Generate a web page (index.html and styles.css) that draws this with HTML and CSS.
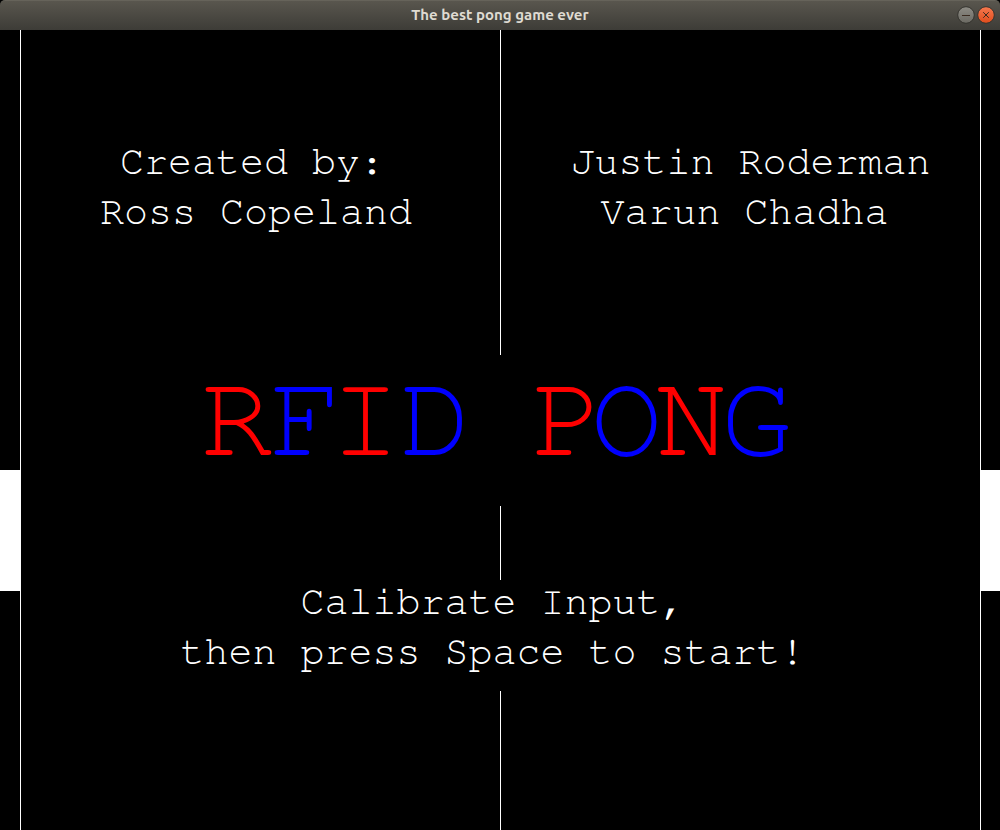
FILE: index.html
```html
<!DOCTYPE html>
<html lang="en">
<head>
<meta charset="utf-8">
<title>The best pong game ever</title>
<link rel="stylesheet" href="styles.css">
</head>
<body>
<div class="window">
  <header class="titlebar">
    <span class="title">The best pong game ever</span>
    <div class="controls">
      <button class="control" type="button" aria-label="Minimize">
        <svg viewBox="0 0 18 18" width="18" height="18">
          <defs><linearGradient id="grey" x2="0" y2="1"><stop stop-color="#8e8c85"/><stop offset="1" stop-color="#6a6962"/></linearGradient></defs>
          <circle class="rim" cx="9" cy="9" r="8.3" fill="url(#grey)"/><path class="mark" d="M5 9.5h8"/>
        </svg>
      </button>
      <button class="control" type="button" aria-label="Close">
        <svg viewBox="0 0 18 18" width="18" height="18">
          <defs><linearGradient id="orange" x2="0" y2="1"><stop stop-color="#f6794f"/><stop offset="1" stop-color="#df4c1c"/></linearGradient></defs>
          <circle class="rim" cx="9" cy="9" r="8.3" fill="url(#orange)"/><path class="mark" d="M6.2 6.2l5.6 5.6M11.8 6.2l-5.6 5.6"/>
        </svg>
      </button>
    </div>
  </header>
  <main class="game">
    <div class="lane lane-left"><div class="paddle"></div></div>
    <div class="court">
      <section class="credits">
        <p class="credit"><span class="line indent-small">Created by:</span><span class="line">Ross Copeland</span></p>
        <p class="credit credit-right"><span class="line">Justin Roderman</span><span class="line indent-large">Varun Chadha</span></p>
      </section>
      <h1 class="logo"><span class="red">R</span><span class="blue">F</span><span class="red">I</span><span class="blue">D </span><span class="red">P</span><span class="blue">O</span><span class="red">N</span><span class="blue">G</span></h1>
      <p class="prompt"><span class="line">Calibrate Input,</span><span class="line">then press Space to start!</span></p>
    </div>
    <div class="lane lane-right"><div class="paddle"></div></div>
  </main>
</div>
</body>
</html>
```
FILE: styles.css
```css
body {
  margin: 0;
  background: #000;
}

.window {
  display: flex;
  flex-direction: column;
  min-height: 100vh;
  background: #000;
  color: #fff;
}

.titlebar {
  display: grid;
  grid-template-columns: 1fr auto 1fr;
  align-items: center;
  box-sizing: border-box;
  height: 30px;
  padding: 0 5px 1px;
  border-top: 1px solid #66635a;
  border-radius: 5px 5px 0 0;
  background: linear-gradient(#59564e, #3d3c37);
}

.title {
  grid-column: 2;
  color: #dfdbd2;
  font: 700 15px/20px Ubuntu, "Noto Sans", sans-serif;
  white-space: nowrap;
}

.controls {
  display: flex;
  justify-content: flex-end;
  gap: 2px;
}

.control {
  display: flex;
  padding: 0;
  border: 0;
  background: none;
}

.rim {
  stroke: #34332e;
  stroke-width: 1;
}

.mark {
  fill: none;
  stroke: #3a2b20;
  stroke-width: 1;
}

.game {
  display: grid;
  flex: 1;
  grid-template-columns: 21px 1fr 20px;
  font: 40px/50px FreeMono, "Nimbus Mono PS", "Liberation Mono", monospace;
}

.lane {
  padding-top: 440px;
}

.lane-left {
  border-right: 1px solid #fff;
}

.lane-right {
  border-left: 1px solid #fff;
}

.paddle {
  height: 121px;
  background: #fff;
}

.court {
  background: linear-gradient(#fff, #fff) center / 1px 100% no-repeat;
}

.credits {
  display: grid;
  grid-template-columns: 1fr 1fr;
  padding: 107px 0 118px;
}

.credit {
  margin: 0;
  padding-left: 79px;
  white-space: nowrap;
}

.credit-right {
  padding-left: 70px;
}

.line {
  display: block;
}

.indent-small {
  padding-left: 20px;
}

.indent-large {
  padding-left: 30px;
}

/* Each letter has its own column, so the wide glyphs can sit close together. */
.logo {
  display: grid;
  grid-template-columns: 69px 60px 70px 132px 59px 65px 65px 72px;
  justify-content: center;
  margin: 0 0 74px;
  padding: 0 8px 23px 0;
  background: #000;
  font-size: 120px;
  font-weight: 400;
  line-height: 128px;
  white-space: pre;
}

.red {
  color: #f00;
}

.blue {
  color: #00f;
}

.prompt {
  display: grid;
  gap: 6px;
  margin: 0;
  padding: 0 16px 17px 0;
  background: #000;
  line-height: 44px;
  text-align: center;
  white-space: nowrap;
}
```
